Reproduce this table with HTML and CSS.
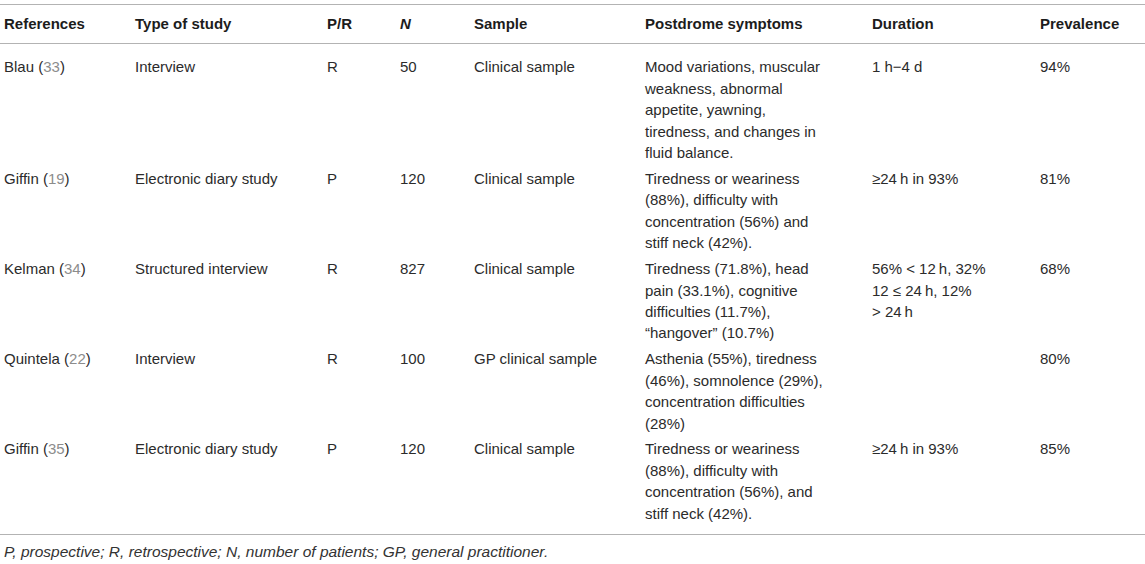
FILE: index.html
```html
<!DOCTYPE html>
<html lang="en">
<head>
    <meta charset="UTF-8">
    <meta name="viewport" content="width=device-width, initial-scale=1.0">
    <title>Postdrome studies</title>
    <link rel="stylesheet" href="styles.css">
</head>
<body>
    <div class="table-wrap">
        <table class="study-table">
            <colgroup>
                <col class="col-ref">
                <col class="col-type">
                <col class="col-pr">
                <col class="col-n">
                <col class="col-sample">
                <col class="col-symptoms">
                <col class="col-duration">
                <col class="col-prev">
            </colgroup>
            <thead>
                <tr>
                    <th>References</th>
                    <th>Type of study</th>
                    <th>P/R</th>
                    <th><i>N</i></th>
                    <th>Sample</th>
                    <th>Postdrome symptoms</th>
                    <th>Duration</th>
                    <th>Prevalence</th>
                </tr>
            </thead>
            <tbody>
                <tr>
                    <td>Blau (<span class="ref">33</span>)</td>
                    <td>Interview</td>
                    <td>R</td>
                    <td>50</td>
                    <td>Clinical sample</td>
                    <td class="symptoms">Mood variations, muscular weakness, abnormal appetite, yawning, tiredness, and changes in fluid balance.</td>
                    <td class="duration">1 h−4 d</td>
                    <td>94%</td>
                </tr>
                <tr>
                    <td>Giffin (<span class="ref">19</span>)</td>
                    <td>Electronic diary study</td>
                    <td>P</td>
                    <td>120</td>
                    <td>Clinical sample</td>
                    <td class="symptoms">Tiredness or weariness (88%), difficulty with concentration (56%) and stiff neck (42%).</td>
                    <td class="duration">≥24&thinsp;h in 93%</td>
                    <td>81%</td>
                </tr>
                <tr>
                    <td>Kelman (<span class="ref">34</span>)</td>
                    <td>Structured interview</td>
                    <td>R</td>
                    <td>827</td>
                    <td>Clinical sample</td>
                    <td class="symptoms">Tiredness (71.8%), head pain (33.1%), cognitive difficulties (11.7%), “hangover” (10.7%)</td>
                    <td class="duration">56% &lt; 12&thinsp;h, 32% 12 ≤ 24&thinsp;h, 12% &gt;&nbsp;24&thinsp;h</td>
                    <td>68%</td>
                </tr>
                <tr>
                    <td>Quintela (<span class="ref">22</span>)</td>
                    <td>Interview</td>
                    <td>R</td>
                    <td>100</td>
                    <td>GP clinical sample</td>
                    <td class="symptoms">Asthenia (55%), tiredness (46%), somnolence (29%), concentration difficulties (28%)</td>
                    <td class="duration"></td>
                    <td>80%</td>
                </tr>
                <tr>
                    <td>Giffin (<span class="ref">35</span>)</td>
                    <td>Electronic diary study</td>
                    <td>P</td>
                    <td>120</td>
                    <td>Clinical sample</td>
                    <td class="symptoms">Tiredness or weariness (88%), difficulty with concentration (56%), and stiff neck (42%).</td>
                    <td class="duration">≥24&thinsp;h in 93%</td>
                    <td>85%</td>
                </tr>
            </tbody>
        </table>
        <p class="table-note">P, prospective; R, retrospective; N, number of patients; GP, general practitioner.</p>
    </div>
</body>
</html>
```

FILE: styles.css
```css
body {
    margin: 0;
    padding: 0;
    font-family: "Liberation Sans", Arial, Helvetica, sans-serif;
    font-size: 15px;
    line-height: 1.43;
    color: #2b2b2b;
    background-color: #ffffff;
}

.table-wrap {
    padding-top: 4px;
}

.study-table {
    width: 100%;
    table-layout: fixed;
    border-collapse: collapse;
}

.col-ref { width: 131px; }
.col-type { width: 192px; }
.col-pr { width: 73px; }
.col-n { width: 74px; }
.col-sample { width: 171px; }
.col-symptoms { width: 227px; }
.col-duration { width: 168px; }
.col-prev { width: 109px; }

.study-table th {
    text-align: left;
    font-weight: bold;
    color: #1c1c1c;
    padding: 8px 4px 9px 4px;
    border-top: 1px solid #b3b3b3;
    border-bottom: 1px solid #b3b3b3;
    white-space: nowrap;
}

.study-table td {
    text-align: left;
    vertical-align: top;
    padding: 2.2px 4px;
}

.study-table tbody tr:first-child td {
    padding-top: 12px;
}

.study-table tbody tr:last-child td {
    padding-bottom: 10px;
    border-bottom: 1px solid #b3b3b3;
}

.study-table td.symptoms {
    padding-right: 41px;
}

.study-table td.duration {
    padding-right: 30px;
}

.ref {
    color: #8c8c8c;
}

.table-note {
    margin: 6px 0 0 0;
    padding-left: 4px;
    font-size: 15.5px;
    font-style: italic;
    color: #333333;
}
```
